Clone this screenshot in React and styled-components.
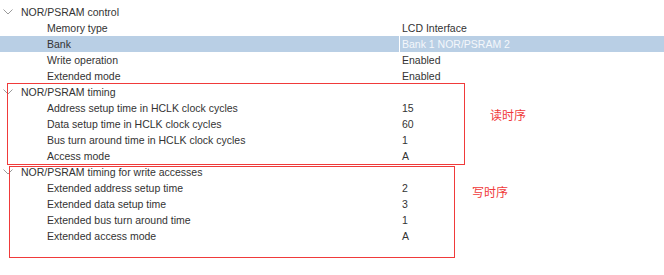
import styled, { createGlobalStyle, css } from "styled-components"

const GlobalStyle = createGlobalStyle`
    body {
        margin: 0;
        background: #ffffff;
        font-family: "Liberation Sans", Arial, sans-serif;
    }
`

// frame = red annotation box drawn over a group (insets relative to the group)
const groups = [
    {
        title: "NOR/PSRAM control",
        rows: [
            ["Memory type", "LCD Interface"],
            ["Bank", "Bank 1 NOR/PSRAM 2", true],
            ["Write operation", "Enabled"],
            ["Extended mode", "Enabled"],
        ],
    },
    {
        title: "NOR/PSRAM timing",
        frame: { top: -1, left: 7, right: 199, bottom: -1 },
        note: { text: "读时序", top: 23, left: 490 },
        rows: [
            ["Address setup time in HCLK clock cycles", "15"],
            ["Data setup time in HCLK clock cycles", "60"],
            ["Bus turn around time in HCLK clock cycles", "1"],
            ["Access mode", "A"],
        ],
    },
    {
        title: "NOR/PSRAM timing for write accesses",
        frame: { top: 2, left: 9, right: 209, bottom: -14 },
        note: { text: "写时序", top: 20, left: 472 },
        rows: [
            ["Extended address setup time", "2"],
            ["Extended data setup time", "3"],
            ["Extended bus turn around time", "1"],
            ["Extended access mode", "A"],
        ],
    },
]

const App = () => {
    return (
        <>
            <GlobalStyle />
            <Tree>
                {groups.map((g) => (
                    <Group key={g.title} $frame={g.frame}>
                        <Header>
                            <Chevron viewBox="0 0 10 6">
                                <path d="M0.5 0.5 L5 5 L9.5 0.5" />
                            </Chevron>
                            {g.title}
                        </Header>
                        {g.rows.map(([name, value, selected]) => (
                            <Row key={name} $selected={selected}>
                                <Name>{name}</Name>
                                <Value $selected={selected}>{value}</Value>
                            </Row>
                        ))}
                        {g.note && <Note $at={g.note}>{g.note.text}</Note>}
                    </Group>
                ))}
            </Tree>
        </>
    )
}

const Tree = styled.div`
    width: 664px;
    height: 275px;
    overflow: hidden;
    box-sizing: border-box;
    padding-top: 4px;
    display: flex;
    flex-direction: column;
    font-size: 10.5px;
    color: #333333;
    background: #ffffff;
`
const Group = styled.div`
    position: relative;
    display: flex;
    flex-direction: column;
    ${(p) =>
        p.$frame &&
        css`
            &::after {
                content: "";
                position: absolute;
                top: ${p.$frame.top}px;
                left: ${p.$frame.left}px;
                right: ${p.$frame.right}px;
                bottom: ${p.$frame.bottom}px;
                border: 1px solid #f03a3a;
                pointer-events: none;
            }
        `}
`
const Header = styled.div`
    display: flex;
    align-items: center;
    height: 16px;
    padding-left: 3px;
    gap: 8px;
`
const Chevron = styled.svg`
    width: 10px;
    height: 6px;
    fill: none;
    stroke: #9a9a9a;
    stroke-width: 1;
    margin-top: -1px;
`
const Row = styled.div`
    display: grid;
    grid-template-columns: 399px 1fr;
    height: 16px;
    background: ${(p) => (p.$selected ? "#b9cfe5" : "transparent")};
`
const Name = styled.div`
    display: flex;
    align-items: center;
    padding-left: 47px;
`
const Value = styled.div`
    display: flex;
    align-items: center;
    padding-left: 2px;
    border-left: 1px solid ${(p) => (p.$selected ? "#ffffff" : "transparent")};
    color: ${(p) => (p.$selected ? "#f4f7fb" : "#333333")};
`
const Note = styled.div`
    position: absolute;
    top: ${(p) => p.$at.top}px;
    left: ${(p) => p.$at.left}px;
    font-family: "Noto Sans CJK SC", sans-serif;
    font-size: 12px;
    line-height: 16px;
    color: #f03a3a;
`

export default App
